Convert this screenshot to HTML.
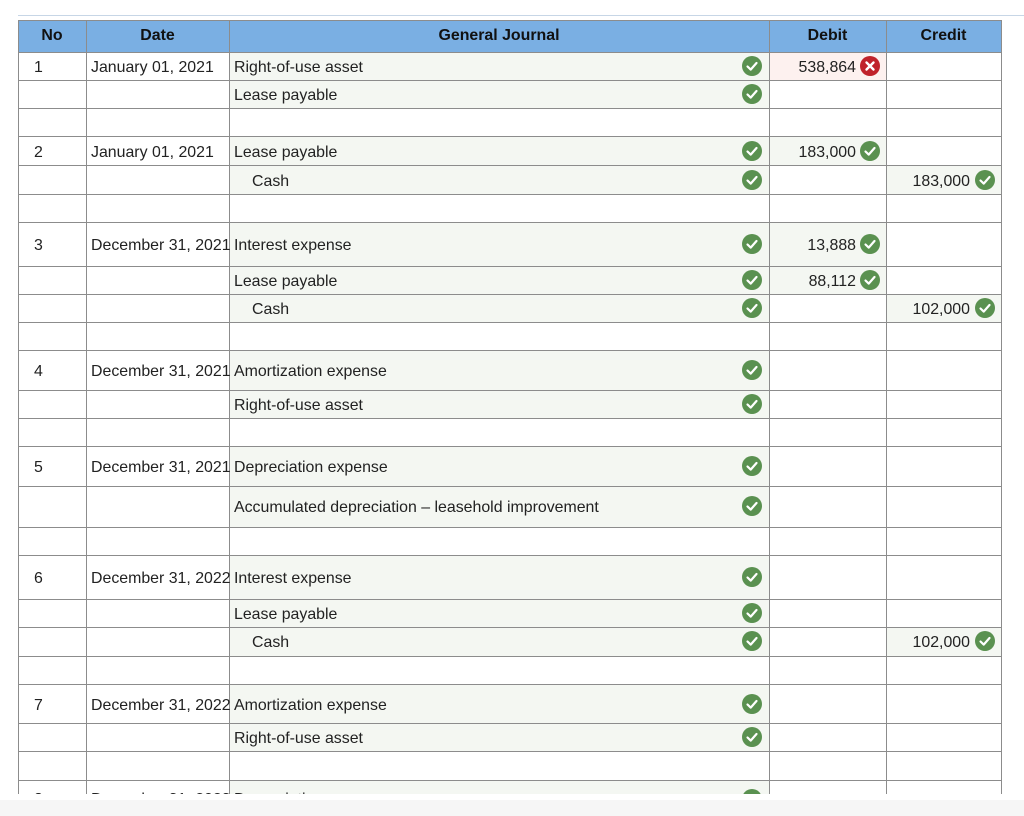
<!DOCTYPE html>
<html><head><meta charset="utf-8">
<style>
html,body{margin:0;padding:0;width:1024px;height:816px;overflow:hidden;background:#fff;font-family:"Liberation Sans",Arial,sans-serif;font-size:15.9px;color:#222;}
#topline{position:absolute;left:18px;top:15px;width:1006px;height:1px;background:#c7d6e6;}
#clip{position:absolute;left:0;top:0;width:1024px;height:794px;overflow:hidden;}
.hdr{position:absolute;top:22px;height:32px;font-weight:bold;color:#111;text-align:center;line-height:28px;font-size:15.9px;}
.hbg{position:absolute;left:18px;top:20px;width:984px;height:32px;background:#7aafe3;}
.c{position:absolute;box-sizing:border-box;}
.hl{position:absolute;left:18px;width:984px;height:1px;background:#8c8c8c;}
.vl{position:absolute;top:20px;width:1px;height:800px;background:#8c8c8c;}
.t{position:absolute;white-space:nowrap;margin-top:1px;}
.ok{position:absolute;width:20px;height:20px;}
.bottom{position:absolute;left:0;top:800px;width:1024px;height:16px;background:#f6f6f6;}
</style></head><body>
<div id="topline"></div>
<div id="clip">
<div class="hbg"></div>
<div class="hdr" style="left:18px;width:68px">No</div>
<div class="hdr" style="left:86px;width:143px">Date</div>
<div class="hdr" style="left:229px;width:540px">General Journal</div>
<div class="hdr" style="left:769px;width:117px">Debit</div>
<div class="hdr" style="left:886px;width:115px">Credit</div>

<div class="c" style="left:229px;width:540px;top:52px;height:28px;background:#f4f7f2"></div>
<div class="c" style="left:769px;width:117px;top:52px;height:28px;background:#fdf1ef"></div>
<div class="c" style="left:229px;width:540px;top:80px;height:28px;background:#f4f7f2"></div>
<div class="c" style="left:229px;width:540px;top:136px;height:29px;background:#f4f7f2"></div>
<div class="c" style="left:769px;width:117px;top:136px;height:29px;background:#f4f7f2"></div>
<div class="c" style="left:229px;width:540px;top:165px;height:29px;background:#f4f7f2"></div>
<div class="c" style="left:886px;width:115px;top:165px;height:29px;background:#f4f7f2"></div>
<div class="c" style="left:229px;width:540px;top:222px;height:44px;background:#f4f7f2"></div>
<div class="c" style="left:769px;width:117px;top:222px;height:44px;background:#f4f7f2"></div>
<div class="c" style="left:229px;width:540px;top:266px;height:28px;background:#f4f7f2"></div>
<div class="c" style="left:769px;width:117px;top:266px;height:28px;background:#f4f7f2"></div>
<div class="c" style="left:229px;width:540px;top:294px;height:28px;background:#f4f7f2"></div>
<div class="c" style="left:886px;width:115px;top:294px;height:28px;background:#f4f7f2"></div>
<div class="c" style="left:229px;width:540px;top:350px;height:40px;background:#f4f7f2"></div>
<div class="c" style="left:229px;width:540px;top:390px;height:28px;background:#f4f7f2"></div>
<div class="c" style="left:229px;width:540px;top:446px;height:40px;background:#f4f7f2"></div>
<div class="c" style="left:229px;width:540px;top:486px;height:41px;background:#f4f7f2"></div>
<div class="c" style="left:229px;width:540px;top:555px;height:44px;background:#f4f7f2"></div>
<div class="c" style="left:229px;width:540px;top:599px;height:28px;background:#f4f7f2"></div>
<div class="c" style="left:229px;width:540px;top:627px;height:29px;background:#f4f7f2"></div>
<div class="c" style="left:886px;width:115px;top:627px;height:29px;background:#f4f7f2"></div>
<div class="c" style="left:229px;width:540px;top:684px;height:39px;background:#f4f7f2"></div>
<div class="c" style="left:229px;width:540px;top:723px;height:28px;background:#f4f7f2"></div>
<div class="c" style="left:229px;width:540px;top:780px;height:40px;background:#f4f7f2"></div>

<div class="hl" style="top:52px"></div><div class="hl" style="top:80px"></div><div class="hl" style="top:108px"></div><div class="hl" style="top:136px"></div><div class="hl" style="top:165px"></div><div class="hl" style="top:194px"></div><div class="hl" style="top:222px"></div><div class="hl" style="top:266px"></div><div class="hl" style="top:294px"></div><div class="hl" style="top:322px"></div><div class="hl" style="top:350px"></div><div class="hl" style="top:390px"></div><div class="hl" style="top:418px"></div><div class="hl" style="top:446px"></div><div class="hl" style="top:486px"></div><div class="hl" style="top:527px"></div><div class="hl" style="top:555px"></div><div class="hl" style="top:599px"></div><div class="hl" style="top:627px"></div><div class="hl" style="top:656px"></div><div class="hl" style="top:684px"></div><div class="hl" style="top:723px"></div><div class="hl" style="top:751px"></div><div class="hl" style="top:780px"></div>
<div class="hl" style="top:20px"></div>
<div class="vl" style="left:18px"></div><div class="vl" style="left:86px"></div><div class="vl" style="left:229px"></div><div class="vl" style="left:769px"></div><div class="vl" style="left:886px"></div><div class="vl" style="left:1001px"></div>

<div class="t" style="left:34px;top:58px">1</div><div class="t" style="left:91px;top:58px">January 01, 2021</div><div class="t" style="left:234px;top:58px">Right-of-use asset</div>
<div class="t" style="left:234px;top:86px">Lease payable</div>
<div class="t" style="left:34px;top:143px">2</div><div class="t" style="left:91px;top:143px">January 01, 2021</div><div class="t" style="left:234px;top:143px">Lease payable</div>
<div class="t" style="left:252px;top:172px">Cash</div>
<div class="t" style="left:34px;top:236px">3</div><div class="t" style="left:91px;top:236px">December 31, 2021</div><div class="t" style="left:234px;top:236px">Interest expense</div>
<div class="t" style="left:234px;top:272px">Lease payable</div>
<div class="t" style="left:252px;top:300px">Cash</div>
<div class="t" style="left:34px;top:362px">4</div><div class="t" style="left:91px;top:362px">December 31, 2021</div><div class="t" style="left:234px;top:362px">Amortization expense</div>
<div class="t" style="left:234px;top:396px">Right-of-use asset</div>
<div class="t" style="left:34px;top:458px">5</div><div class="t" style="left:91px;top:458px">December 31, 2021</div><div class="t" style="left:234px;top:458px">Depreciation expense</div>
<div class="t" style="left:234px;top:498px">Accumulated depreciation – leasehold improvement</div>
<div class="t" style="left:34px;top:569px">6</div><div class="t" style="left:91px;top:569px">December 31, 2022</div><div class="t" style="left:234px;top:569px">Interest expense</div>
<div class="t" style="left:234px;top:605px">Lease payable</div>
<div class="t" style="left:252px;top:633px">Cash</div>
<div class="t" style="left:34px;top:696px">7</div><div class="t" style="left:91px;top:696px">December 31, 2022</div><div class="t" style="left:234px;top:696px">Amortization expense</div>
<div class="t" style="left:234px;top:729px">Right-of-use asset</div>
<div class="t" style="left:34px;top:790px">8</div><div class="t" style="left:91px;top:790px">December 31, 2023</div><div class="t" style="left:234px;top:790px">Depreciation expense</div>

<div class="t" style="right:168px;top:58px">538,864</div>
<div class="t" style="right:168px;top:143px">183,000</div>
<div class="t" style="right:54px;top:172px">183,000</div>
<div class="t" style="right:168px;top:236px">13,888</div>
<div class="t" style="right:168px;top:272px">88,112</div>
<div class="t" style="right:54px;top:300px">102,000</div>
<div class="t" style="right:54px;top:633px">102,000</div>

<svg width="0" height="0" style="position:absolute"><defs>
<g id="ck"><circle cx="10" cy="10" r="10" fill="#5a9150"/><path d="M5.5 10.5 L8.7 13.6 L14.5 7" fill="none" stroke="#fff" stroke-width="2.2" stroke-linecap="round" stroke-linejoin="round"/></g>
<g id="xx"><circle cx="10" cy="10" r="10" fill="#c0222a"/><path d="M6.5 6.5 L13.5 13.5 M13.5 6.5 L6.5 13.5" stroke="#fff" stroke-width="2.4" stroke-linecap="round"/></g>
</defs></svg>
<svg class="ok" style="left:742px;top:56px"><use href="#ck"/></svg>
<svg class="ok" style="left:860px;top:56px"><use href="#xx"/></svg>
<svg class="ok" style="left:742px;top:84px"><use href="#ck"/></svg>
<svg class="ok" style="left:742px;top:141px"><use href="#ck"/></svg>
<svg class="ok" style="left:860px;top:141px"><use href="#ck"/></svg>
<svg class="ok" style="left:742px;top:170px"><use href="#ck"/></svg>
<svg class="ok" style="left:975px;top:170px"><use href="#ck"/></svg>
<svg class="ok" style="left:742px;top:234px"><use href="#ck"/></svg>
<svg class="ok" style="left:860px;top:234px"><use href="#ck"/></svg>
<svg class="ok" style="left:742px;top:270px"><use href="#ck"/></svg>
<svg class="ok" style="left:860px;top:270px"><use href="#ck"/></svg>
<svg class="ok" style="left:742px;top:298px"><use href="#ck"/></svg>
<svg class="ok" style="left:975px;top:298px"><use href="#ck"/></svg>
<svg class="ok" style="left:742px;top:360px"><use href="#ck"/></svg>
<svg class="ok" style="left:742px;top:394px"><use href="#ck"/></svg>
<svg class="ok" style="left:742px;top:456px"><use href="#ck"/></svg>
<svg class="ok" style="left:742px;top:496px"><use href="#ck"/></svg>
<svg class="ok" style="left:742px;top:567px"><use href="#ck"/></svg>
<svg class="ok" style="left:742px;top:603px"><use href="#ck"/></svg>
<svg class="ok" style="left:742px;top:631px"><use href="#ck"/></svg>
<svg class="ok" style="left:975px;top:631px"><use href="#ck"/></svg>
<svg class="ok" style="left:742px;top:694px"><use href="#ck"/></svg>
<svg class="ok" style="left:742px;top:727px"><use href="#ck"/></svg>
<svg class="ok" style="left:742px;top:789px"><use href="#ck"/></svg>
</div>
<div class="bottom"></div>
</body></html>
